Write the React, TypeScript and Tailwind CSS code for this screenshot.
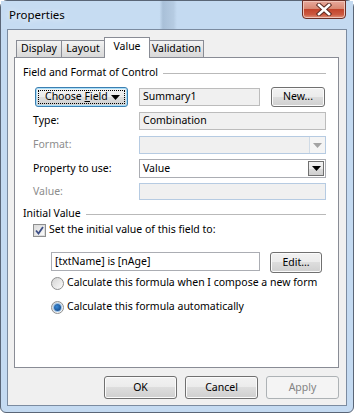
import React from 'react';

const font = { fontFamily: '"Noto Sans", "Open Sans", sans-serif' };

const btn =
  'flex items-center justify-center rounded-[3px] border border-[#707070] bg-[linear-gradient(#f2f2f2_0%,#ebebeb_50%,#dddddd_50%,#cfcfcf_100%)] shadow-[inset_0_0_0_1px_#fbfbfb] text-[10.5px] text-black whitespace-nowrap';

function Arrow({ color = '#000' }: { color?: string }) {
  return (
    <svg width="9" height="5" viewBox="0 0 9 5">
      <path d="M0 0h9L4.5 5z" fill={color} />
    </svg>
  );
}

function Checkbox() {
  return (
    <div className="shrink-0 w-[13px] h-[13px] border border-[#8e8f8f] bg-[#f4f4f4] flex items-center justify-center">
      <div className="w-[11px] h-[11px] border border-[#dedede] bg-[linear-gradient(135deg,#dcdcdc,#fbfbfb)] flex items-center justify-center">
        <svg width="9" height="9" viewBox="0 0 9 9">
          <path d="M1 4.5 L3.5 7.5 L8 1" stroke="#3d4f86" strokeWidth="1.8" fill="none" />
        </svg>
      </div>
    </div>
  );
}

function Radio({ checked }: { checked?: boolean }) {
  return (
    <div className="shrink-0 w-[13px] h-[13px] rounded-full border border-[#8e8f8f] bg-[linear-gradient(135deg,#d4d4d4,#fbfbfb)] flex items-center justify-center">
      {checked && (
        <div className="w-[7px] h-[7px] rounded-full bg-[radial-gradient(circle_at_40%_40%,#3a8ad6,#0c3a78)] shadow-[0_0_0_1px_#9ac3ea]" />
      )}
    </div>
  );
}

function Row({ label, disabled, children }: { label: string; disabled?: boolean; children: React.ReactNode }) {
  return (
    <div className="flex items-center">
      <div className={`shrink-0 w-[124px] pl-[18px] text-[10.5px] whitespace-nowrap ${disabled ? 'text-[#8d8d8d]' : 'text-black'}`}>
        {label}
      </div>
      {children}
    </div>
  );
}

function GroupHeader({ title }: { title: string }) {
  return (
    <div className="flex items-center h-[16px] pl-[8px] pr-[12px]">
      <span className="text-[10.5px] text-black whitespace-nowrap">{title}</span>
      <div className="flex-1 h-px bg-[#b9b9b9] ml-[5px]" />
    </div>
  );
}

export default function App() {
  return (
    <div className="w-[354px] h-[413px] bg-white" style={font}>
      <div className="w-full h-full flex flex-col rounded-t-[7px] rounded-b-[6px] border border-[#5a6677] bg-[#c4daf1] px-[6px] pb-[6px]">
        {/* Title bar */}
        <div className="h-[28px] flex items-start justify-between bg-[linear-gradient(90deg,#c6dcf2_0%,#c6dcf2_45%,#a9c0d8_46%,#b5cbe2_49%,#c4daf1_50%,#c4daf1_100%)] -mx-[6px] pl-[8px] pr-[7px]">
          <span className="mt-[5px] text-[11.5px] text-black [text-shadow:0_0_6px_#fff]">Properties</span>
          <div className="w-[44px] h-[19px] -mt-px rounded-b-[4px] border border-[#6b2f26] bg-[linear-gradient(#e8a99c_0%,#d88873_45%,#c2442c_50%,#cc5a41_80%,#e0957f_100%)] shadow-[inset_0_0_0_1px_#f0c4b8] flex items-center justify-center">
            <svg width="16" height="13" viewBox="0 0 16 13">
              <path d="M3 2 L13 11 M13 2 L3 11" stroke="#5a2a22" strokeWidth="4.5" strokeLinecap="square" />
              <path d="M3 2 L13 11 M13 2 L3 11" stroke="#ffffff" strokeWidth="2.6" strokeLinecap="square" />
            </svg>
          </div>
        </div>

        {/* Client area */}
        <div className="flex-1 flex flex-col border border-[#7b8ba0] bg-[#f0f0f0] pl-[6px] pr-[7px] pt-[7px] pb-[6px]">
          {/* Tabs */}
          <div className="flex items-end h-[20px] pl-[2px] text-[10.5px] text-black">
            <div className="w-[46px] h-[17px] border border-b-0 border-[#898c95] bg-[linear-gradient(#f3f3f3,#e5e5e5_50%,#d9d9d9)] flex items-center justify-center">
              Display
            </div>
            <div className="w-[43px] h-[17px] border border-b-0 border-l-0 border-[#898c95] bg-[linear-gradient(#f3f3f3,#e5e5e5_50%,#d9d9d9)] flex items-center justify-center">
              Layout
            </div>
            <div className="relative z-10 w-[46px] h-[21px] -mb-px -ml-px border border-b-0 border-[#898c95] bg-white flex items-start pt-[1px] justify-center">
              Value
            </div>
            <div className="w-[54px] h-[17px] border border-b-0 border-l-0 border-[#898c95] bg-[linear-gradient(#f3f3f3,#e5e5e5_50%,#d9d9d9)] flex items-center justify-center">
              Validation
            </div>
          </div>

          {/* Panel */}
          <div className="h-[311px] border border-[#898c95] bg-white flex flex-col">
            <div className="mt-[7px]">
              <GroupHeader title="Field and Format of Control" />
            </div>

            <div className="flex items-center mt-[6px] h-[20px]">
              <div className="shrink-0 ml-[20px] w-[93px] h-[20px] rounded-[3px] border border-[#3c7fb1] bg-[linear-gradient(#f2f2f2_0%,#ebebeb_50%,#dddddd_50%,#cfcfcf_100%)] shadow-[inset_0_0_0_1px_#a9def9] p-[2px]">
                <div className="w-full h-full border border-dotted border-black flex items-center justify-between pl-[6px] pr-[4px] text-[10.5px] text-black whitespace-nowrap">
                  <span>
                    Choose <span className="underline">F</span>ield
                  </span>
                  <Arrow />
                </div>
              </div>
              <div className="shrink-0 ml-[11px] w-[121px] h-[18px] border border-[#bcbcbc] bg-[#f0f0f0] flex items-center pl-[3px] text-[10.5px] text-black">
                Summary1
              </div>
              <div className={`shrink-0 ml-[11px] w-[54px] h-[20px] ${btn}`}>New...</div>
            </div>

            <div className="mt-[5px]">
              <Row label="Type:">
                <div className="w-[187px] h-[18px] border border-[#bcbcbc] bg-[#f0f0f0] flex items-center pl-[3px] text-[10.5px] text-black">
                  Combination
                </div>
              </Row>
            </div>

            <div className="mt-[6px]">
              <Row label="Format:" disabled>
                <div className="w-[187px] h-[18px] border border-[#b6cbe2] bg-[#f0f0f0] flex justify-end">
                  <div className="w-[16px] h-full border-l border-[#d0dbe6] bg-[#f4f4f4] flex items-center justify-center">
                    <Arrow color="#a3a3a3" />
                  </div>
                </div>
              </Row>
            </div>

            <div className="mt-[5px]">
              <Row label="Property to use:">
                <div className="w-[187px] h-[19px] border border-[#abadb3] bg-white flex items-center justify-between pl-[3px] text-[10.5px] text-black">
                  <span>Value</span>
                  <div className="w-[16px] h-[15px] mr-px border border-[#707070] bg-[linear-gradient(#f2f2f2_0%,#ebebeb_50%,#dddddd_50%,#cfcfcf_100%)] flex items-center justify-center">
                    <Arrow />
                  </div>
                </div>
              </Row>
            </div>

            <div className="mt-[5px]">
              <Row label="Value:" disabled>
                <div className="w-[187px] h-[17px] border border-[#b6cbe2] bg-[#f0f0f0]" />
              </Row>
            </div>

            <div className="mt-[6px]">
              <GroupHeader title="Initial Value" />
            </div>

            <div className="flex items-center h-[14px] mt-px pl-[18px] text-[10.5px] text-black whitespace-nowrap">
              <Checkbox />
              <span className="ml-[3px]">Set the initial value of this field to:</span>
            </div>

            <div className="flex items-start mt-[15px] pl-[36px]">
              <div className="shrink-0 w-[209px] h-[19px] border border-[#abadb3] bg-white flex items-center pl-[3px] text-[10.5px] text-black whitespace-nowrap">
                [txtName] is [nAge]
              </div>
              <div className={`shrink-0 ml-[10px] w-[52px] h-[21px] ${btn}`}>Edit...</div>
            </div>

            <div className="flex items-center h-[14px] mt-[3px] pl-[36px] text-[10.5px] text-black whitespace-nowrap">
              <Radio />
              <span className="ml-[3px]">Calculate this formula when I compose a new form</span>
            </div>
            <div className="flex items-center h-[14px] mt-[10px] pl-[36px] text-[10.5px] text-black whitespace-nowrap">
              <Radio checked />
              <span className="ml-[3px]">Calculate this formula automatically</span>
            </div>
          </div>

          {/* Bottom buttons */}
          <div className="flex justify-end gap-[8px] mt-[8px]">
            <div className={`w-[73px] h-[23px] ${btn}`}>OK</div>
            <div className={`w-[73px] h-[23px] ${btn}`}>Cancel</div>
            <div className="w-[73px] h-[23px] flex items-center justify-center rounded-[3px] border border-[#adb2b5] bg-[#f4f4f4] text-[10.5px] text-[#838383]">
              Apply
            </div>
          </div>
        </div>
      </div>
    </div>
  );
}
